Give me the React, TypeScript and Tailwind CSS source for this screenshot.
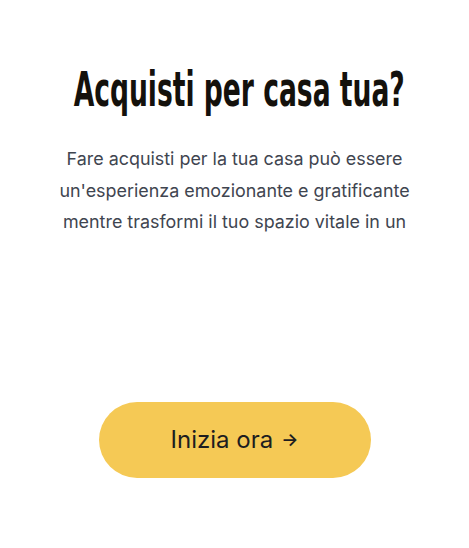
import React from 'react';

export default function App() {
  return (
    <div className="min-h-screen w-full bg-white flex flex-col items-center" style={{ fontFamily: 'Inter, "Noto Sans", sans-serif' }}>
      <div className="mt-[63px] h-[52px] w-full flex justify-center pl-[10px]">
        <h1
          className="text-[48px] leading-[52px] font-bold text-[#14110c] whitespace-nowrap scale-x-[0.615] origin-center font-stretch-condensed"
          style={{ fontFamily: '"DejaVu Sans", sans-serif' }}
        >
          Acquisti per casa tua?
        </h1>
      </div>
      <p className="mt-[28px] w-[380px] text-center text-[17.9px] leading-[31.5px] text-[#3f4550]">
        Fare acquisti per la tua casa può essere un'esperienza emozionante e gratificante mentre trasformi il tuo spazio vitale in un
      </p>
      <button className="mt-[164px] w-[272px] h-[76px] rounded-full bg-[#f5c955] flex items-center justify-center gap-2 text-[24px] text-[#1d1d20]">
        Inizia ora
        <span className="text-[18px] font-semibold">→</span>
      </button>
    </div>
  );
}
